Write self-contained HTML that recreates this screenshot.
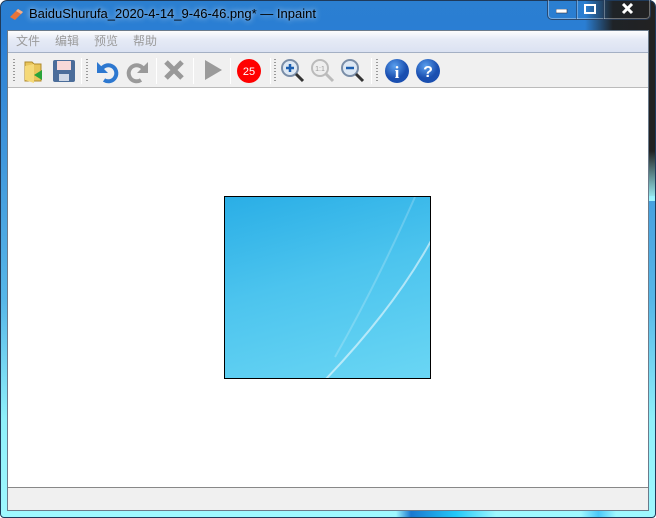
<!DOCTYPE html>
<html><head><meta charset="utf-8"><style>
*{margin:0;padding:0;box-sizing:border-box}
body{width:656px;height:518px;overflow:hidden;position:relative;font-family:"Liberation Sans","Noto Sans CJK SC",sans-serif;background:#fff}
.frame{position:absolute;left:0;top:0;width:656px;height:518px;border-radius:7px 7px 4px 4px;overflow:hidden;
background:linear-gradient(180deg,#2b7fd0 0px,#2a7ed4 30px,#3a8fd8 120px,#57b7e8 300px,#8ff0fa 420px,#9ff8ff 518px);border:1px solid #1f3a5a}
.dark{position:absolute;right:0;top:0;width:70px;height:195px;background:linear-gradient(90deg,rgba(30,30,30,0),rgba(30,30,30,.95) 40%,#222)}
.dark2{position:absolute;right:0;top:150px;width:70px;height:50px;background:linear-gradient(180deg,rgba(0,0,0,0),#9ff8ff)}
.bstreak{position:absolute;left:395px;bottom:0;width:100px;height:8px;background:linear-gradient(90deg,transparent,#1a78d0 15%,#22c8f8 60%,transparent)}
.bstreak2{position:absolute;left:580px;bottom:0;width:35px;height:8px;background:linear-gradient(90deg,transparent,#4ac8f8,transparent)}
.title{position:absolute;left:29px;top:6px;font-size:13px;color:#000;text-shadow:0 0 6px rgba(255,255,255,.9)}
.btns{position:absolute;left:547px;top:-1px;width:104px;height:21px;z-index:3;display:flex;border:1px solid rgba(40,60,90,.8);border-top:none;border-radius:0 0 5px 5px;box-shadow:inset 0 0 0 1px rgba(255,255,255,.35)}
.b{height:20px;position:relative}
.b+.b{border-left:1px solid rgba(40,60,90,.6);box-shadow:inset 1px 0 rgba(255,255,255,.3)}
svg{position:absolute}
.client{position:absolute;left:7px;top:30px;width:642px;height:481px;border:1px solid #6b7b8b;background:#f0f0f0}
.menu{height:22px;background:linear-gradient(#fdfdfe,#e6ebf6 40%,#dbe2f2);border-bottom:1px solid #a4b0c4;font-size:12px;line-height:21px;padding-left:8px}
.menu span{margin-right:15px;color:#9b9b9b}
.tool{position:absolute;top:22px;left:0;width:640px;height:35px;background:#f0f0f0;border-bottom:1px solid #bbb}
.canvas{position:absolute;left:0;top:57px;width:640px;height:400px;background:#fff;border-bottom:1px solid #888}
.img{position:absolute;left:216px;top:108px;width:207px;height:183px;border:1px solid #000;
background:linear-gradient(165deg,#2aaee6 0%,#4cc4ee 45%,#6ad6f4 100%);overflow:hidden}
.sep{position:absolute;top:5px;width:1px;height:26px;background:#ccc;border-right:1px solid #fff}
.grip{position:absolute;top:6px;width:2px;height:24px;background:repeating-linear-gradient(#999 0 1px,transparent 1px 3px)}
</style></head><body>
<div class="frame"><div class="dark"></div><div class="dark2"></div><div class="bstreak"></div><div class="bstreak2"></div></div>
<svg style="left:8px;top:7px" width="16" height="14"><path d="M2 10 L10 2 L15 5 L7 13Z" fill="#e8743a"/><path d="M10 2 L15 5 L13 7 L8 4Z" fill="#f3b08a"/></svg>
<div class="title">BaiduShurufa_2020-4-14_9-46-46.png* — Inpaint</div>
<div class="btns">
<div class="b" style="width:28px"><svg style="left:8px;top:10px" width="12" height="5"><rect x="0" y="0" width="11" height="4" fill="#fff" stroke="#334" stroke-width=".6"/></svg></div>
<div class="b" style="width:27px"><svg style="left:7px;top:5px" width="12" height="11"><rect x="1" y="1" width="10" height="8" fill="none" stroke="#fff" stroke-width="2"/></svg></div>
<div class="b" style="width:47px"><svg style="left:17px;top:4px" width="13" height="12"><path d="M2 1 L11 10 M11 1 L2 10" stroke="#fff" stroke-width="3"/></svg></div>
</div>
<div class="client">
<div class="menu"><span>文件</span><span>编辑</span><span>预览</span><span>帮助</span></div>
<div class="tool">
<div class="grip" style="left:5px"></div>
<svg style="left:14px;top:5px" width="24" height="26"><path d="M3 4h7l2 2h7v17H3z" fill="#e9c55a" stroke="#b08a2a"/><path d="M3 8 L12 6 L12 25 L3 22Z" fill="#f5d978"/><path d="M20 12 L12 17 L20 22Z" fill="#2aa43a"/></svg>
<svg style="left:44px;top:6px" width="24" height="24"><rect x="1" y="1" width="22" height="22" rx="2" fill="#4b6d9a"/><rect x="5" y="2" width="14" height="9" fill="#f8d8d8"/><rect x="7" y="15" width="10" height="7" fill="#cfd8e6"/></svg>
<div class="sep" style="left:73px"></div><div class="grip" style="left:78px"></div>
<svg style="left:86px;top:5px" width="26" height="26"><path d="M7 12 A8 8 0 1 1 10 22" fill="none" stroke="#2d78d0" stroke-width="4"/><path d="M3 4 L3 15 L14 15Z" fill="#2d78d0"/></svg>
<svg style="left:117px;top:5px" width="26" height="26"><path d="M19 12 A8 8 0 1 0 16 22" fill="none" stroke="#9a9a9a" stroke-width="4"/><path d="M23 4 L23 15 L12 15Z" fill="#9a9a9a"/></svg>
<div class="sep" style="left:148px"></div>
<svg style="left:155px;top:6px" width="22" height="22"><path d="M3 3 L19 19 M19 3 L3 19" stroke="#999" stroke-width="5"/></svg>
<div class="sep" style="left:185px"></div>
<svg style="left:194px;top:5px" width="22" height="24"><path d="M3 2 L20 12 L3 22Z" fill="#9b9b9b"/></svg>
<div class="sep" style="left:222px"></div>
<svg style="left:228px;top:5px" width="28" height="26"><circle cx="13" cy="13" r="12" fill="#f00"/><text x="13" y="17" font-size="11" fill="#fff" text-anchor="middle" font-family="Liberation Sans">25</text></svg>
<div class="sep" style="left:262px"></div><div class="grip" style="left:266px"></div>
<svg style="left:272px;top:5px" width="26" height="26"><circle cx="10" cy="10" r="8" fill="#dde8f4" stroke="#7a8ea8" stroke-width="2"/><path d="M6 10h8M10 6v8" stroke="#1d5fb0" stroke-width="2.5"/><path d="M16 16 L23 23" stroke="#333" stroke-width="3"/></svg>
<svg style="left:302px;top:5px" width="26" height="26"><circle cx="10" cy="10" r="8" fill="#eee" stroke="#bbb" stroke-width="2"/><text x="10" y="13" font-size="7" fill="#999" text-anchor="middle">1:1</text><path d="M16 16 L23 23" stroke="#bbb" stroke-width="3"/></svg>
<svg style="left:332px;top:5px" width="26" height="26"><circle cx="10" cy="10" r="8" fill="#dde8f4" stroke="#7a8ea8" stroke-width="2"/><path d="M6 10h8" stroke="#1d5fb0" stroke-width="2.5"/><path d="M16 16 L23 23" stroke="#333" stroke-width="3"/></svg>
<div class="sep" style="left:363px"></div><div class="grip" style="left:368px"></div>
<svg style="left:376px;top:5px" width="26" height="26"><defs><radialGradient id="g" cx=".4" cy=".3"><stop offset="0" stop-color="#5aa0ee"/><stop offset="1" stop-color="#1a4fb0"/></radialGradient></defs><circle cx="13" cy="13" r="12" fill="url(#g)"/><text x="13" y="20" font-size="17" font-weight="bold" fill="#fff" text-anchor="middle" font-family="Liberation Serif">i</text></svg>
<svg style="left:407px;top:5px" width="26" height="26"><circle cx="13" cy="13" r="12" fill="url(#g)"/><text x="13" y="19" font-size="16" font-weight="bold" fill="#fff" text-anchor="middle">?</text></svg>
</div>
<div class="canvas"><div class="img">
<svg style="left:0;top:0" width="207" height="183"><path d="M100 183 Q170 110 207 42" stroke="rgba(255,255,255,.55)" stroke-width="2" fill="none"/><path d="M110 160 Q150 90 190 0" stroke="rgba(255,255,255,.2)" stroke-width="2" fill="none"/></svg>
</div></div>
</div>
</body></html>
